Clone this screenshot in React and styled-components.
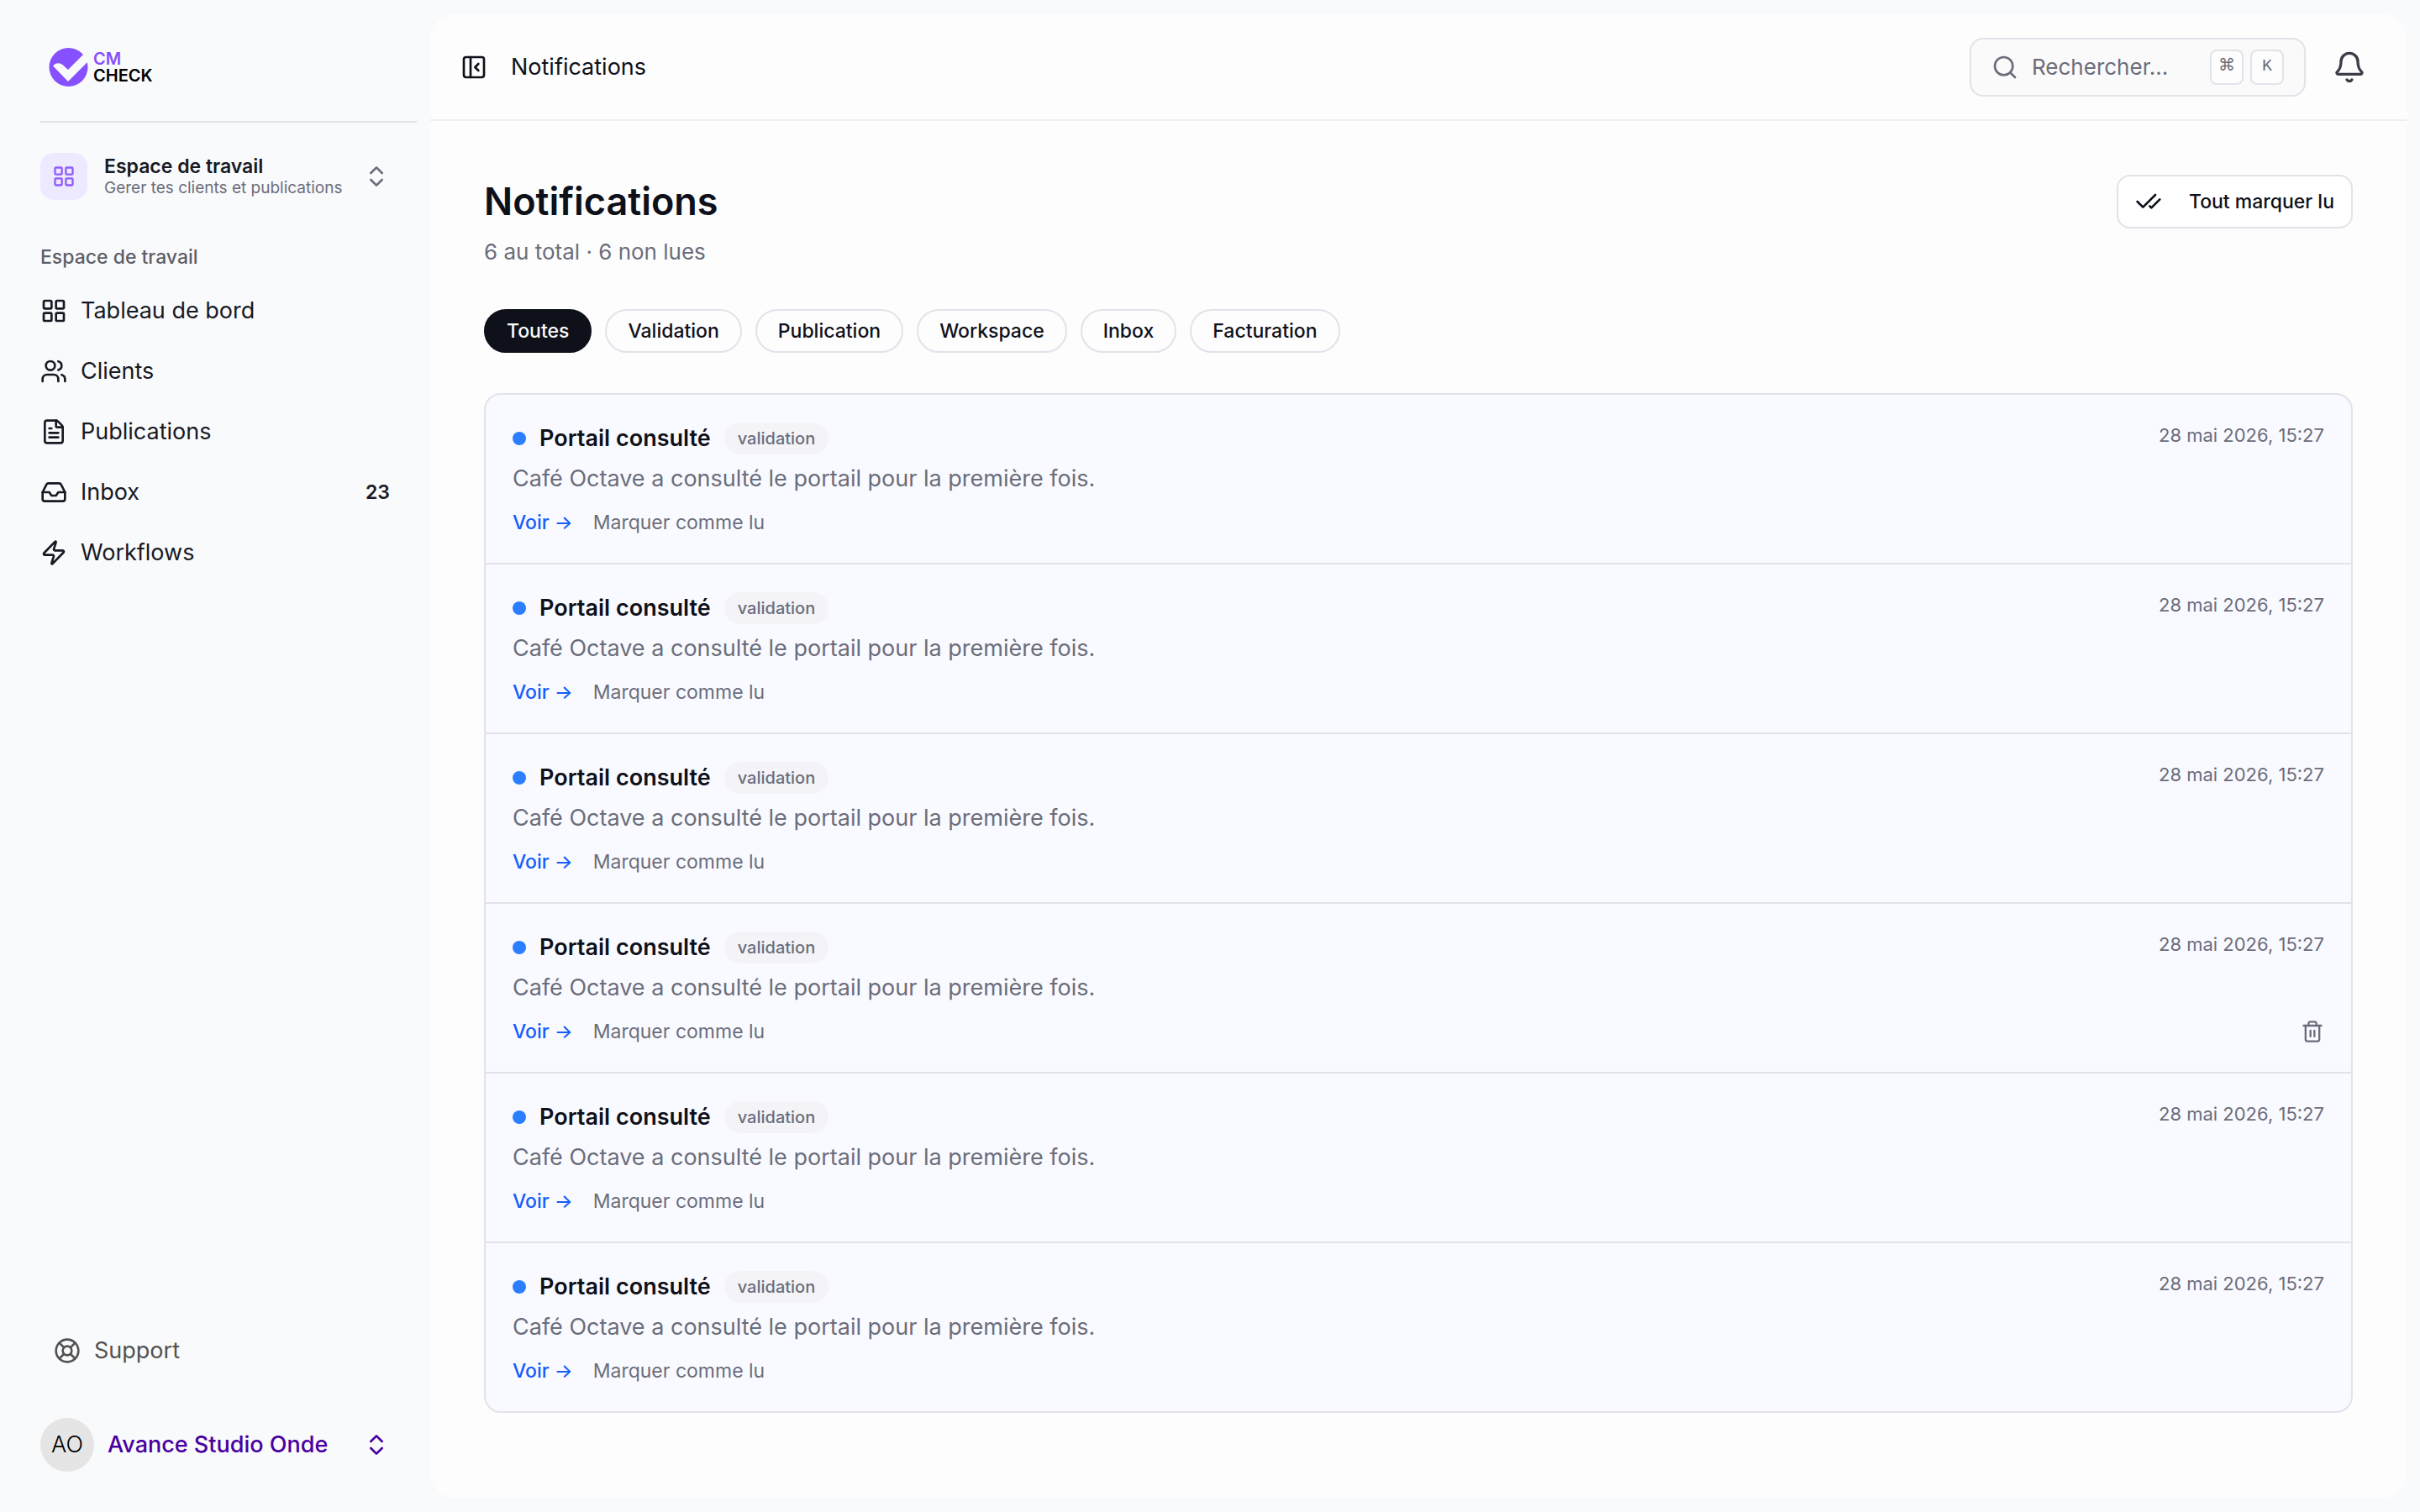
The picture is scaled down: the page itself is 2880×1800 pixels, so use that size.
import React, { useState } from 'react';
import styled, { createGlobalStyle } from 'styled-components';
import {
  Bell,
  CheckCheck,
  ChevronsUpDown,
  FileText,
  Inbox,
  LayoutGrid,
  LifeBuoy,
  PanelLeftClose,
  Search,
  Trash2,
  Users,
  Zap,
} from 'lucide-react';

const navItems = [
  { label: 'Tableau de bord', icon: LayoutGrid },
  { label: 'Clients', icon: Users },
  { label: 'Publications', icon: FileText },
  { label: 'Inbox', icon: Inbox, count: 23 },
  { label: 'Workflows', icon: Zap },
];

const filters = ['Toutes', 'Validation', 'Publication', 'Workspace', 'Inbox', 'Facturation'];

const notifications = [1, 2, 3, 4, 5, 6].map((id) => ({
  id,
  title: 'Portail consulté',
  category: 'validation',
  text: 'Café Octave a consulté le portail pour la première fois.',
  date: '28 mai 2026, 15:27',
}));

const GlobalStyle = createGlobalStyle`
  *, *::before, *::after {
    box-sizing: border-box;
  }

  body {
    margin: 0;
    background: #f9fafc;
    color: #0f111a;
    font-family: Inter, 'Liberation Sans', sans-serif;
    font-size: 27px;
    line-height: 40px;
    -webkit-font-smoothing: antialiased;
  }

  button, input, kbd {
    font: inherit;
    color: inherit;
  }

  button {
    margin: 0;
    padding: 0;
    border: none;
    background: none;
    cursor: pointer;
  }

  a {
    color: inherit;
    text-decoration: none;
  }

  h1, h2, p, ul {
    margin: 0;
    padding: 0;
    list-style: none;
  }

  svg {
    flex-shrink: 0;
  }
`;

const Layout = styled.div`
  display: grid;
  grid-template-columns: 512px minmax(0, 1fr);
  min-height: 100vh;
`;

// ---------- Sidebar ----------
const Sidebar = styled.aside`
  display: flex;
  flex-direction: column;
  padding: 0 16px 48px 48px;
`;

const LogoLink = styled.a`
  display: flex;
  align-items: center;
  gap: 6px;
  height: 146px;
  padding: 16px 0 0 10px;
  border-bottom: 2px solid #e2e2ea;
`;

const LogoText = styled.span`
  display: flex;
  flex-direction: column;
  font-size: 20px;
  font-weight: 600;
  line-height: 20px;
  color: #000;
`;

const LogoAccent = styled.span`
  color: #8650ff;
`;

const Switcher = styled.button`
  display: flex;
  align-items: center;
  width: 100%;
  padding-right: 32px;
  text-align: left;
  color: ${(props) => props.$color};
`;

const WorkspaceSwitcher = styled(Switcher)`
  gap: 20px;
  margin-top: 36px;
`;

const WorkspaceTile = styled.span`
  display: flex;
  align-items: center;
  justify-content: center;
  width: 56px;
  height: 56px;
  border-radius: 16px;
  background: #ede9fe;
  color: #8f5bff;
`;

const SwitcherText = styled.span`
  display: flex;
  flex: 1;
  flex-direction: column;
  white-space: nowrap;
`;

const WorkspaceName = styled.span`
  font-size: 23px;
  font-weight: 600;
  line-height: 28px;
  color: #171923;
`;

const WorkspaceHint = styled.span`
  font-size: 19px;
  line-height: 24px;
`;

const NavLabel = styled.h2`
  margin: 52px 0 12px;
  font-size: 23px;
  font-weight: 500;
  line-height: 32px;
  color: #5e5e66;
`;

const NavLink = styled.a`
  display: flex;
  align-items: center;
  gap: 16px;
  height: 72px;
  padding: 0 32px 0 ${(props) => (props.$inset ? '16px' : '0')};
  color: ${(props) => (props.$inset ? '#525252' : '#171923')};
`;

const NavCount = styled.span`
  margin-left: auto;
  font-size: 23px;
  font-weight: 600;
`;

const SidebarFooter = styled.div`
  display: flex;
  flex-direction: column;
  gap: 44px;
  margin-top: auto;
`;

const AccountSwitcher = styled(Switcher)`
  gap: 16px;
  font-weight: 500;
`;

const Avatar = styled.span`
  display: flex;
  align-items: center;
  justify-content: center;
  width: 64px;
  height: 64px;
  border-radius: 50%;
  background: #e5e5e5;
  color: #000;
  font-weight: 300;
`;

// ---------- Main panel ----------
const Panel = styled.div`
  margin: 16px 16px 16px 0;
  border-radius: 32px;
  background: #fdfdfd;
`;

const TopBar = styled.header`
  display: flex;
  align-items: center;
  height: 128px;
  padding: 2px 48px 0 36px;
  border-bottom: 2px solid #efeff0;
`;

const IconButton = styled.button`
  display: flex;
  align-items: center;
  justify-content: center;
  color: ${(props) => props.$color || 'inherit'};
`;

const Crumb = styled.span`
  margin-left: 28px;
`;

const SearchBox = styled.label`
  display: flex;
  align-items: center;
  gap: 8px;
  width: 400px;
  height: 70px;
  margin: 0 32px 0 auto;
  padding: 0 24px;
  border: 2px solid #e2e2ea;
  border-radius: 16px;
  background: #fafafa;
  color: #6b6d7b;
  font-size: 26px;
`;

const SearchInput = styled.input`
  flex: 1;
  min-width: 0;
  padding: 0 0 0 8px;
  border: none;
  outline: none;
  background: transparent;

  &::placeholder {
    color: #6b6d7b;
    opacity: 1;
  }
`;

const Key = styled.kbd`
  display: flex;
  justify-content: center;
  width: 40px;
  height: 42px;
  border: 2px solid #e2e2ea;
  border-radius: 8px;
  background: #fdfdfd;
  font-family: 'Liberation Mono', 'DejaVu Sans', monospace;
  font-size: 20px;
  line-height: 36px;
`;

const Content = styled.main`
  padding: 64px;
`;

const PageHead = styled.div`
  display: flex;
  align-items: flex-start;
  justify-content: space-between;
`;

const Title = styled.h1`
  font-size: 45px;
  font-weight: 600;
  line-height: 64px;
`;

const Summary = styled.p`
  margin-top: 8px;
  color: #6b6d7b;
  font-size: 26px;
`;

const MarkAllButton = styled.button`
  display: flex;
  align-items: center;
  gap: 32px;
  height: 64px;
  padding: 0 20px;
  border: 2px solid #e2e2ea;
  border-radius: 16px;
  background: #fff;
  font-size: 23px;
  font-weight: 500;
`;

const Filters = styled.div`
  display: flex;
  flex-wrap: wrap;
  gap: 16px;
  margin: 48px 0;
`;

const FilterButton = styled.button`
  height: 52px;
  padding: 0 25px;
  border: 2px solid ${(props) => (props.$active ? '#0f111a' : '#e2e2ea')};
  border-radius: 26px;
  background: ${(props) => (props.$active ? '#0f111a' : '#fdfdfd')};
  color: ${(props) => (props.$active ? '#fafafa' : '#0f111a')};
  font-size: 23px;
  font-weight: 500;
  line-height: 32px;
`;

const List = styled.ul`
  border: 2px solid #e2e2ea;
  border-radius: 20px;
  background: #f9faff;
`;

const Row = styled.li`
  display: flex;
  justify-content: space-between;
  padding: 32px;

  & + & {
    border-top: 2px solid #e2e2e8;
  }
`;

const RowTitle = styled.div`
  display: flex;
  align-items: center;
  gap: 16px;
`;

const Dot = styled.span`
  width: 16px;
  height: 16px;
  border-radius: 50%;
  background: #2b7fff;
`;

const RowName = styled.h2`
  font-size: 27px;
  font-weight: 600;
`;

const Tag = styled.span`
  padding: 0 16px;
  border-radius: 19px;
  background: #f4f4f8;
  color: #6b6d7b;
  font-size: 20px;
  font-weight: 500;
  line-height: 38px;
`;

const RowText = styled.p`
  margin-top: 8px;
  color: #6b6d7b;
`;

const RowActions = styled.div`
  display: flex;
  gap: 24px;
  margin-top: 16px;
  color: #6b6d7b;
  font-size: 23px;
  line-height: 32px;
`;

const ViewLink = styled.a`
  color: #155dfc;
  font-weight: 500;
`;

const RowSide = styled.div`
  display: flex;
  flex-direction: column;
  align-items: flex-end;
  justify-content: space-between;
  color: #6b6d7b;
  font-size: 22px;
  line-height: 32px;
`;

const DeleteButton = styled(IconButton)`
  height: 32px;
  opacity: ${(props) => (props.$visible ? 1 : 0)};
`;

const Logo = () => (
  <LogoLink href="#" aria-label="CM Check">
    <svg width="47" height="46" viewBox="0 0 47 46">
      <circle cx="23.5" cy="23" r="23" fill="#8650ff" />
      <path
        d="M5 21.5 C8 17.5 13 17 17 20.5 L23 26 L44 5 L50 13 L23 40 Z"
        fill="#f9fafc"
      />
    </svg>
    <LogoText>
      <LogoAccent>CM</LogoAccent>
      <span>CHECK</span>
    </LogoText>
  </LogoLink>
);

const Notification = ({ item, hovered, onHover }) => (
  <Row onMouseEnter={() => onHover(item.id)}>
    <div>
      <RowTitle>
        <Dot />
        <RowName>{item.title}</RowName>
        <Tag>{item.category}</Tag>
      </RowTitle>
      <RowText>{item.text}</RowText>
      <RowActions>
        <ViewLink href="#">Voir →</ViewLink>
        <button type="button">Marquer comme lu</button>
      </RowActions>
    </div>
    <RowSide>
      <time dateTime="2026-05-28T15:27">{item.date}</time>
      <DeleteButton type="button" aria-label="Supprimer" $visible={hovered}>
        <Trash2 size={28} />
      </DeleteButton>
    </RowSide>
  </Row>
);

const App = () => {
  const [filter, setFilter] = useState('Toutes');
  const [hoveredId, setHoveredId] = useState(4);

  return (
    <>
      <GlobalStyle />
      <Layout>
        <Sidebar>
          <Logo />
          <WorkspaceSwitcher type="button" $color="#6b6d7b">
            <WorkspaceTile>
              <LayoutGrid size={28} />
            </WorkspaceTile>
            <SwitcherText>
              <WorkspaceName>Espace de travail</WorkspaceName>
              <WorkspaceHint>Gerer tes clients et publications</WorkspaceHint>
            </SwitcherText>
            <ChevronsUpDown size={32} />
          </WorkspaceSwitcher>
          <NavLabel>Espace de travail</NavLabel>
          <nav>
            {navItems.map(({ label, icon: Icon, count }) => (
              <NavLink key={label} href="#">
                <Icon size={32} />
                {label}
                {count && <NavCount>{count}</NavCount>}
              </NavLink>
            ))}
          </nav>
          <SidebarFooter>
            <NavLink href="#" $inset>
              <LifeBuoy size={32} />
              Support
            </NavLink>
            <AccountSwitcher type="button" $color="#4a00a0">
              <Avatar>AO</Avatar>
              <SwitcherText>Avance Studio Onde</SwitcherText>
              <ChevronsUpDown size={32} />
            </AccountSwitcher>
          </SidebarFooter>
        </Sidebar>

        <Panel>
          <TopBar>
            <IconButton type="button" aria-label="Réduire le menu">
              <PanelLeftClose size={32} />
            </IconButton>
            <Crumb>Notifications</Crumb>
            <SearchBox>
              <Search size={32} />
              <SearchInput type="text" placeholder="Rechercher..." aria-label="Rechercher" />
              <Key>⌘</Key>
              <Key>K</Key>
            </SearchBox>
            <IconButton type="button" aria-label="Alertes" $color="#3a3c47">
              <Bell size={40} />
            </IconButton>
          </TopBar>

          <Content>
            <PageHead>
              <div>
                <Title>Notifications</Title>
                <Summary>6 au total · 6 non lues</Summary>
              </div>
              <MarkAllButton type="button">
                <CheckCheck size={32} />
                Tout marquer lu
              </MarkAllButton>
            </PageHead>

            <Filters>
              {filters.map((name) => (
                <FilterButton
                  key={name}
                  type="button"
                  $active={name === filter}
                  onClick={() => setFilter(name)}
                >
                  {name}
                </FilterButton>
              ))}
            </Filters>

            <List>
              {notifications.map((item) => (
                <Notification
                  key={item.id}
                  item={item}
                  hovered={item.id === hoveredId}
                  onHover={setHoveredId}
                />
              ))}
            </List>
          </Content>
        </Panel>
      </Layout>
    </>
  );
};

export default App;
